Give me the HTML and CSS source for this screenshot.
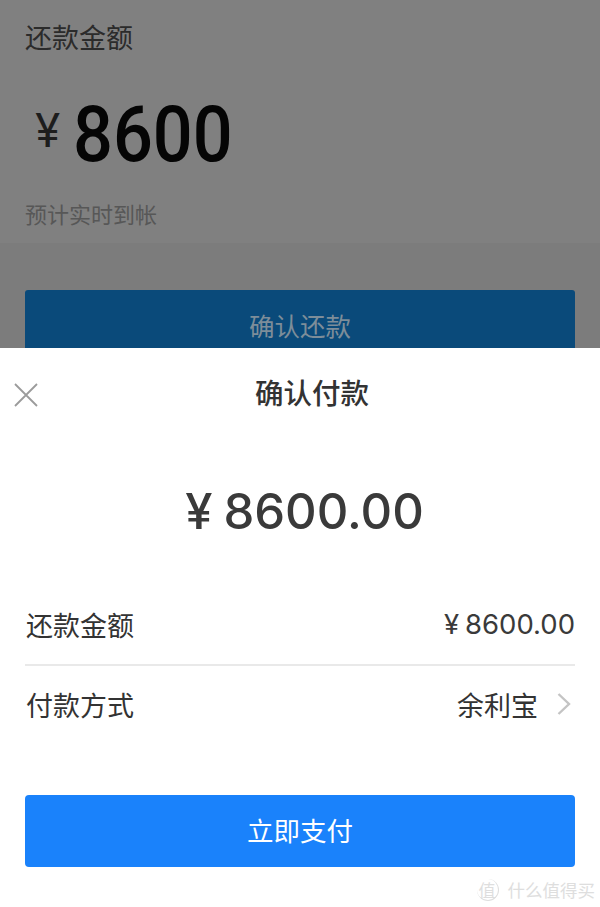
FILE: index.html
```html
<!DOCTYPE html>
<html lang="zh-CN">
  <head>
    <meta charset="UTF-8" />
    <title>确认付款</title>
    <link rel="stylesheet" href="styles.css">
  </head>
  <body>
    <div class="screen">
      <section class="backdrop">
        <div class="backdrop-info">
          <div class="backdrop-label">还款金额</div>
          <div class="backdrop-amount">
            <span class="backdrop-yen">¥</span>
            <span class="backdrop-number">8600</span>
          </div>
          <div class="backdrop-hint">预计实时到帐</div>
        </div>
        <div class="backdrop-button">确认还款</div>
      </section>

      <section class="sheet">
        <header class="sheet-header">
          <svg class="close-icon" viewBox="0 0 24 24" width="24" height="24">
            <path d="M1 1 L23 23 M23 1 L1 23" />
          </svg>
          <h1 class="sheet-title">确认付款</h1>
        </header>

        <div class="total"><span class="total-yen">¥</span>8600.00</div>

        <div class="row row-line">
          <span>还款金额</span>
          <span class="row-amount"><span class="row-yen">¥</span>8600.00</span>
        </div>
        <div class="row row-method-line">
          <span>付款方式</span>
          <span class="row-method">
            余利宝
            <svg class="chevron" viewBox="0 0 14 22" width="14" height="22">
              <path d="M1.5 1 L12 11 L1.5 21" />
            </svg>
          </span>
        </div>

        <button class="pay-button">立即支付</button>
      </section>

      <div class="watermark">
        <span class="watermark-badge">值</span>
        <span>什么值得买</span>
      </div>
    </div>
  </body>
</html>
```

FILE: styles.css
```css
* {
  box-sizing: border-box;
}
body {
  margin: 0;
  font-family: "Noto Sans CJK SC", "Noto Sans", sans-serif;
}
.screen {
  position: relative;
  width: 600px;
  height: 907px;
  display: flex;
  flex-direction: column;
  overflow: hidden;
}
.backdrop {
  height: 348px;
  flex: none;
  background: #7c7c7c;
  overflow: hidden;
}
.backdrop-info {
  height: 243px;
  padding: 20px 25px 0;
  background: #808080;
}
.backdrop-label {
  margin-top: -2px;
  font-size: 27px;
  line-height: 38px;
  color: #2b2b2b;
}
.backdrop-amount {
  display: flex;
  align-items: center;
  height: 78px;
  margin-top: 39px;
  padding-left: 10px;
  gap: 13px;
}
.backdrop-yen {
  font-family: "Inter", sans-serif;
  font-size: 46px;
  margin-top: -8px;
  color: #1d1d1d;
}
.backdrop-number {
  display: inline-block;
  font-family: "Roboto", sans-serif;
  font-size: 78px;
  font-weight: 500;
  color: #050505;
  transform: scaleX(0.9);
  transform-origin: left center;
}
.backdrop-hint {
  margin-top: 24px;
  font-size: 22px;
  line-height: 32px;
  color: #575757;
}
.backdrop-button {
  height: 70px;
  margin: 47px 25px 0;
  padding-top: 15px;
  border-radius: 3px;
  background: #0a4a7a;
  color: #7d8d99;
  font-size: 25.5px;
  line-height: 40px;
  text-align: center;
}
.sheet {
  flex: 1;
  padding: 0 25px;
  background: #fff;
}
.sheet-header {
  position: relative;
  height: 90px;
  padding-left: 24px;
  padding-bottom: 2px;
  display: flex;
  justify-content: center;
  align-items: center;
}
.close-icon {
  position: absolute;
  left: -11px;
  top: 35px;
}
.close-icon path {
  fill: none;
  stroke: #9b9b9b;
  stroke-width: 1.8;
}
.sheet-title {
  margin: 0;
  font-size: 28.5px;
  font-weight: 500;
  line-height: 40px;
  color: #333;
}
.total {
  margin-top: 40px;
  padding-left: 9px;
  font-family: "Inter", sans-serif;
  font-size: 49px;
  font-weight: 500;
  line-height: 68px;
  text-align: center;
  color: #3a3a3a;
}
.total-yen {
  margin-right: 11px;
}
.row {
  display: flex;
  justify-content: space-between;
  align-items: center;
  height: 80px;
  padding-left: 1px;
  font-size: 27px;
  color: #333;
}
.row-line {
  margin-top: 40px;
  padding-bottom: 2px;
  border-bottom: 2px solid #e9e9e9;
}
.row-method-line {
  height: 76px;
}
.row-amount {
  font-family: "Inter", sans-serif;
  font-size: 27.5px;
  color: #3a3a3a;
}
.row-yen {
  margin-right: 6px;
}
.row-method {
  display: flex;
  align-items: center;
  gap: 19px;
  padding-right: 4px;
}
.chevron path {
  fill: none;
  stroke: #c4c4c4;
  stroke-width: 2.4;
}
.pay-button {
  display: block;
  width: 100%;
  height: 72px;
  margin-top: 53px;
  padding-bottom: 5px;
  border: none;
  border-radius: 4px;
  background: #1a82fb;
  color: #fff;
  font-family: inherit;
  font-size: 26.5px;
}
.watermark {
  position: absolute;
  right: 5px;
  bottom: 5px;
  display: flex;
  align-items: center;
  gap: 9px;
  font-size: 17.5px;
  color: #dedede;
}
.watermark-badge {
  width: 22px;
  height: 22px;
  border-radius: 50%;
  border-right: 1px solid #dedede;
  border-bottom: 1px solid #dedede;
  font-size: 17px;
  line-height: 21px;
  text-align: center;
}
```
